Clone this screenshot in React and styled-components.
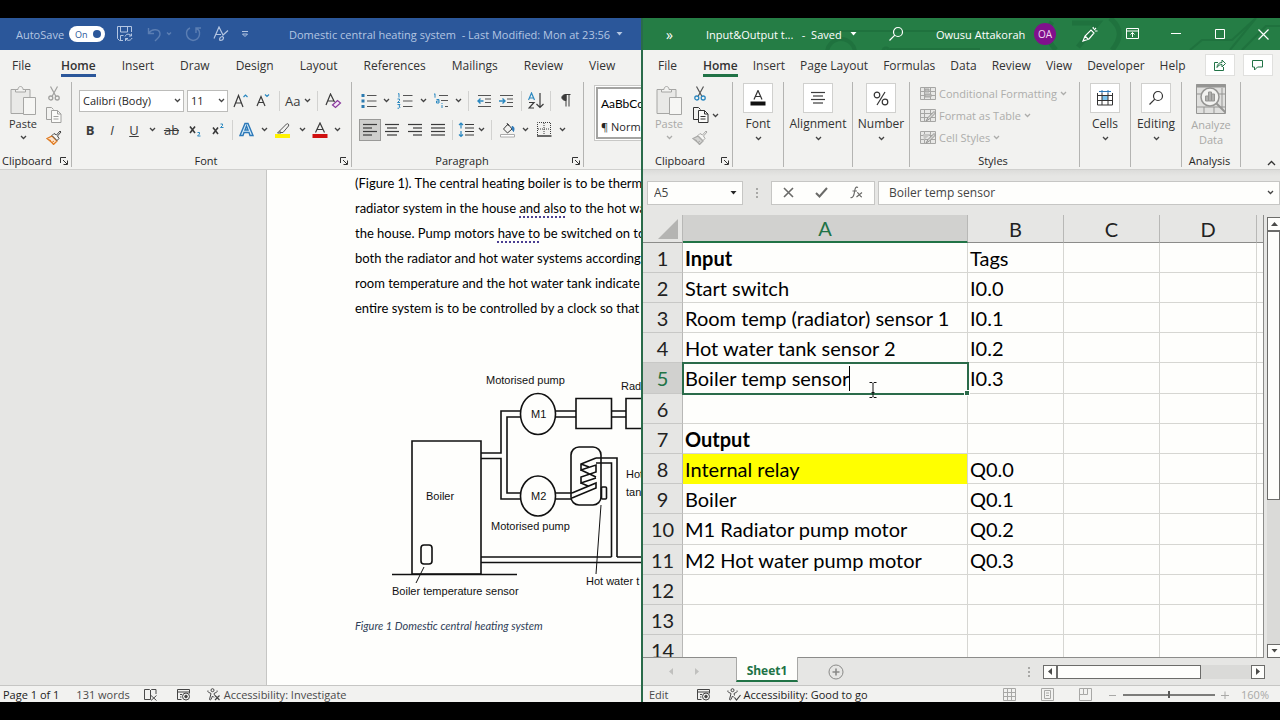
import React, {Fragment} from 'react';
import styled, {createGlobalStyle} from 'styled-components'

const GlobalStyle = createGlobalStyle`
  * {
      box-sizing: border-box;
  }

  body {
      margin: 0;
      background: #000000;
      font-family: 'Open Sans', 'Noto Sans', sans-serif;
      font-size: 12px;
      color: #262626;
  }

  button, input, select {
      font: inherit;
      color: inherit;
      margin: 0;
      padding: 0;
      border: none;
      border-radius: 0;
      background: none;
      outline: none;
  }

  svg {
      display: block;
      flex: none;
      fill: none;
  }

  svg:not([stroke]) {
      stroke: currentColor;
  }
`

const Screen = styled.div`
  display: flex;
  height: 100vh;
  padding: 18px 0;
  background: #000000;
`

const WordWindow = styled.section`
  display: flex;
  flex-direction: column;
  flex: 0 0 calc(50% + 1px);
  min-width: 0;
  overflow: hidden;
  background: #f2f2f0;
`

const ExcelWindow = styled.section`
  display: flex;
  flex-direction: column;
  flex: 1;
  min-width: 0;
  overflow: hidden;
  position: relative;
  border-left: 2px solid #2a6b4a;
  background: #e6e6e4;
`

const TitleBar = styled.header`
  display: flex;
  align-items: center;
  flex: none;
  height: 32px;
  position: relative;
  overflow: hidden;
  white-space: nowrap;
  font-size: 11px;
  color: ${props => props.color};
  background: ${props => props.bg};
`

const TitlePattern = styled.svg`
  position: absolute;
  right: 0;
  top: 0;
`

const TitleItem = styled.div`
  display: flex;
  align-items: center;
  justify-content: ${props => props.start ? "flex-start" : "center"};
  flex: none;
  width: ${props => props.w}px;
  height: 32px;
  padding-left: ${props => props.pad || 0}px;
  position: relative;
`

const TitleButton = styled(TitleItem).attrs({as: 'button'})`
  opacity: ${props => props.dim ? 0.35 : 1};
`

const MoreItem = styled(TitleItem)`
  font-size: 14px;
`

const SheetArrows = styled(TitleItem)`
  gap: 22px;
  height: 27px;
  color: #c0c0be;
`

const Grow = styled.div`
  flex: 1;
`

const AutoSwitch = styled.button`
  display: flex;
  align-items: center;
  justify-content: space-between;
  width: 36px;
  height: 16px;
  padding: 0 4px 0 6px;
  border-radius: 8px;
  font-size: 9px;
  color: #2b579a;
  background: #ffffff;

  & i {
      width: 8px;
      height: 8px;
      border-radius: 4px;
      background: #2b579a;
  }
`

const Avatar = styled.span`
  width: 22px;
  height: 22px;
  border-radius: 11px;
  font-size: 10px;
  line-height: 22px;
  text-align: center;
  color: #f0d8f0;
  background: #80108c;
`

const Tabs = styled.nav`
  display: flex;
  flex: none;
  height: 32px;
  gap: ${props => props.gap}px;
  padding: 0 0 0 ${props => props.start}px;
  overflow: hidden;
  background: #f2f2f0;

  & > button:first-child {
      margin-right: ${props => props.extra}px;
  }
`

const Tab = styled.button`
  flex: none;
  height: 27px;
  line-height: 27px;
  padding-top: 2px;
  font-size: 12px;
  font-weight: ${props => props.active ? 600 : 400};
  color: #333333;
  border-bottom: 3px solid ${props => props.active || "transparent"};
`

const TabActions = styled.div`
  display: flex;
  gap: 8px;
  margin-left: auto;
  padding: 4px 7px 0 0;
`

const SmallBox = styled.button`
  display: grid;
  place-items: center;
  flex: none;
  width: 30px;
  height: 22px;
  border: 1px solid #e0e0de;
  color: #217346;
  background: #ffffff;
`

const Ribbon = styled.div`
  display: flex;
  flex: none;
  height: 88px;
  position: relative;
  overflow: hidden;
  border-bottom: 1px solid #d0d0ce;
  background: #f2f2f0;
`

const Group = styled.div`
  display: flex;
  flex-direction: column;
  flex: ${props => props.grow ? "1 0" : "0 0"} ${props => props.w}px;
  height: 85px;
  border-right: 1px solid ${props => props.open ? "transparent" : "#b4b4b2"};
`

const GroupBody = styled.div`
  flex: 1;
  display: flex;
  flex-direction: ${props => props.column ? "column" : "row"};
  padding-left: ${props => props.pad || 0}px;
`

const GroupFoot = styled.div`
  display: flex;
  align-items: center;
  flex: none;
  height: 16px;
  margin-bottom: -2px;
  padding-right: 3px;
  font-size: 11px;
  line-height: 16px;

  & span {
      flex: 1;
      padding-left: ${props => props.pad || 0}px;
      text-align: ${props => props.pad ? "left" : "center"};
  }
`

const ToolRow = styled.div`
  display: flex;
  align-items: center;
  height: 29px;

  &:first-child {
      margin-top: 4px;
  }
`

const Tool = styled.button`
  display: flex;
  align-items: center;
  justify-content: center;
  flex: none;
  width: ${props => props.w || 22}px;
  height: 22px;
  font-size: 13px;
  color: #3b3b3b;
  border: 1px solid ${props => props.on ? "#9a9a98" : "transparent"};
  background: ${props => props.on ? "#cfcfcd" : "none"};

  & b {
      font-weight: 700;
  }
`

const Divider = styled.span`
  flex: none;
  width: 1px;
  height: 20px;
  margin: 0 ${props => props.m || 4}px;
  background: #d2d2d0;
`

const Combo = styled.label`
  display: flex;
  align-items: center;
  flex: none;
  width: ${props => props.w}px;
  height: 22px;
  margin-right: 3px;
  padding: 0 2px 0 3px;
  border: 1px solid #bcbcba;
  font-size: 11px;
  background: #ffffff;

  & select {
      flex: 1;
      min-width: 0;
      appearance: none;
  }
`

const PasteButton = styled.button`
  display: flex;
  flex-direction: column;
  align-items: center;
  flex: none;
  width: ${props => props.w}px;
  padding-top: 4px;
  font-size: 11px;
  line-height: 16px;
  color: ${props => props.dim ? "#a9a9a7" : "#333333"};

  & span {
      margin: 0 0 3px;
  }
`

const ClipColumn = styled.div`
  display: flex;
  flex-direction: column;
`

const BigTool = styled.button`
  display: flex;
  flex-direction: column;
  align-items: center;
  flex: 1;
  font-size: 12px;
  line-height: 16px;
  color: ${props => props.dim ? "#a9a9a7" : "#333333"};

  & > span {
      margin: 3px 0 4px;
  }

  & > em {
      margin-top: 2px;
      font-style: normal;
      font-size: 11px;
      line-height: 15px;
  }
`

const Tile = styled.i`
  display: grid;
  place-items: center;
  width: 30px;
  height: 30px;
  margin-top: 1px;
  border: 1px solid #d0d0ce;
  color: #333333;
  background: #ffffff;
`

const StyleLine = styled.button`
  display: flex;
  align-items: center;
  gap: 3px;
  height: 22px;
  font-size: 11px;
  color: #adadab;
`

const Gallery = styled.div`
  flex: none;
  width: 80px;
  height: 56px;
  margin: 3px 0 0 10px;
  padding: 1px;
  border: 1px solid #c8c8c6;
  background: #ffffff;

  & button {
      display: block;
      width: 100%;
      height: 100%;
      border: 2px solid #a4a4a2;
      padding: 3px 0 0 3px;
      text-align: left;
      font-size: 11px;
      line-height: 23px;
      white-space: nowrap;
  }

  & strong {
      display: block;
      font-family: 'Lato', sans-serif;
      font-size: 12px;
      font-weight: 400;
      color: #000000;
  }
`

const Collapse = styled.button`
  position: absolute;
  right: 4px;
  bottom: 3px;
`

const DocArea = styled.main`
  display: flex;
  flex: 1;
  min-height: 0;
  overflow: hidden;
  background: #e6e6e4;
`

const Gutter = styled.div`
  flex: 0 0 266px;
`

const Page = styled.article`
  flex: 1;
  min-width: 0;
  padding: 1px 0 0 88px;
  overflow: hidden;
  border-left: 1px solid #c6c6c4;
  background: #fefefc;

  & p {
      margin: 0;
      font-family: 'Lato', sans-serif;
      font-size: 13px;
      line-height: 25px;
      white-space: nowrap;
      color: #000000;
  }

  & u {
      text-decoration: underline dotted #4b3f92 2px;
      text-underline-offset: 3px;
  }

  & figure {
      margin: 44px 0 0;
  }

  & figcaption {
      margin-top: 12px;
      font-family: 'Lato', sans-serif;
      font-size: 11px;
      line-height: 18px;
      font-style: italic;
      white-space: nowrap;
      color: #2f4058;
  }
`

const Diagram = styled.svg`
  overflow: visible;

  & text {
      font-family: 'Liberation Sans', Arial, sans-serif;
      font-size: 11px;
      fill: #111111;
      stroke: none;
  }
`

const StatusBar = styled.footer`
  display: flex;
  align-items: center;
  flex: none;
  height: 17px;
  overflow: hidden;
  border-top: 1px solid #c6c6c4;
  font-size: 11px;
  line-height: 16px;
  white-space: nowrap;
  color: #4a4a4a;
  background: #f2f2f0;
`

const StatusItem = styled.span`
  display: flex;
  align-items: center;
  gap: 3px;
  flex: none;
  margin-left: ${props => props.ml || 0}px;
  padding-top: 1px;
  color: ${props => props.color || "inherit"};

  &:last-child {
      padding-right: 11px;
  }
`

const ZoomSlider = styled.input`
  appearance: none;
  width: 92px;
  height: 12px;
  margin: 0 3px;
  background: linear-gradient(#7c7c7a, #7c7c7a) center / 100% 2px no-repeat;

  &::-webkit-slider-thumb {
      appearance: none;
      width: 2px;
      height: 7px;
      background: #5a5a58;
  }
`

const FormulaRow = styled.div`
  display: flex;
  align-items: center;
  flex: none;
  height: 45px;
  padding: 0 0 0 4px;
  background: linear-gradient(#dcdcda, #e6e6e4 6px);
`

const Field = styled.label`
  display: flex;
  align-items: center;
  flex: ${props => props.w ? `0 0 ${props.w}px` : 1};
  min-width: 0;
  height: 24px;
  padding: 0 5px 0 ${props => props.pad}px;
  border: 1px solid #c6c6c4;
  background: #fefefc;

  & input {
      flex: 1;
      min-width: 0;
      font-size: 12px;
      color: #444444;
  }
`

const FormulaButtons = styled.div`
  display: flex;
  align-items: center;
  justify-content: space-around;
  width: 104px;
  height: 24px;
  margin-right: 3px;
  border: 1px solid #c6c6c4;
  color: #6a6a68;
  background: #fefefc;
`

const Dots = styled.div`
  display: flex;
  flex-direction: column;
  align-items: center;
  gap: 2px;
  width: 28px;

  & i {
      width: 2px;
      height: 2px;
      background: #a8a8a6;
  }
`

const SheetArea = styled.div`
  display: flex;
  flex: 1;
  min-height: 0;
`

const SheetClip = styled.div`
  flex: 1;
  min-width: 0;
  overflow: hidden;
  border-right: 1px solid #8c8c8a;
  border-bottom: 1px solid #8c8c8a;
  background: #fefefc;
`

const Sheet = styled.table`
  width: 100%;
  table-layout: fixed;
  border-collapse: separate;
  border-spacing: 0;
  font-family: 'Lato', sans-serif;
  font-size: 20px;
  line-height: 26px;
  color: #000000;

  & tr {
      height: 30px;
  }

  & thead tr {
      height: 28px;
  }

  & tbody tr:nth-child(5n) {
      height: 31px;
  }

  & th {
      padding: 0;
      font-weight: 400;
      text-align: center;
      color: #222222;
      background: #e6e6e4;
      border-right: 1px solid #b8b8b6;
  }

  & thead th {
      padding-top: 1px;
      line-height: 25px;
      border-bottom: 1px solid #8c8c8a;
  }

  & thead th:last-child {
      border-right: none;
  }

  & tbody th {
      border-bottom: 1px solid #c8c8c6;
  }

  & th.picked {
      color: #217346;
      background: #d1d1cf;
  }

  & thead th.picked {
      border-bottom: 2px solid #217346;
  }
`

const Cell = styled.td`
  padding: 0 0 0 2px;
  white-space: nowrap;
  font-weight: ${props => props.bold ? 700 : 400};
  border-right: 1px solid #d6d6d2;
  border-bottom: 1px solid ${props => props.fill || "#d6d6d2"};
  background: ${props => props.fill || "#fefefc"};

  &:last-child {
      border-right: none;
  }
`

const ActiveCell = styled(Cell)`
  position: relative;
  outline: 2px solid #2a6b4a;
  outline-offset: -1px;

  & > div {
      display: flex;
      align-items: center;
      height: 28px;
  }

  & input {
      field-sizing: content;
      height: 26px;
  }
`

const TextCaret = styled.i`
  width: 1px;
  height: 25px;
  background: #000000;
`

const FillHandle = styled.i`
  position: absolute;
  right: -3px;
  bottom: -3px;
  width: 6px;
  height: 6px;
  border: 1px solid #ffffff;
  background: #2a6b4a;
`

const Pointer = styled.svg`
  position: absolute;
  left: 186px;
  top: 19px;
`

const CornerCell = styled.th`
  & svg {
      margin: 0 4px 0 auto;
  }
`

const ScrollV = styled.div`
  display: flex;
  flex-direction: column;
  flex: none;
  width: 13px;
  margin: 2px 0 0 3px;
  background: #dadad8;
`

const ScrollH = styled.div`
  display: flex;
  flex: none;
  width: 222px;
  height: 14px;
  background: #dadad8;
`

const ScrollButton = styled.button`
  display: grid;
  place-items: center;
  flex: none;
  width: 14px;
  height: 14px;
  border: 1px solid #6c6c6a;
  color: #4a4a48;
  background: #fefefc;
`

const ScrollThumb = styled.div`
  flex: 0 0 ${props => props.size};
  border: 1px solid #6c6c6a;
  background: #fefefc;
`

const SheetTabs = styled.div`
  display: flex;
  align-items: center;
  flex: none;
  height: 27px;
  padding-right: 15px;
  color: #8a8a88;
`

const SheetTab = styled.button`
  align-self: flex-start;
  width: 62px;
  height: 25px;
  margin: -1px 30px 0 12px;
  padding-top: 4px;
  font-size: 12px;
  font-weight: 700;
  line-height: 18px;
  color: #217346;
  border: 1px solid #a8a8a6;
  border-top: none;
  border-bottom: 2px solid #217346;
  background: #fefefc;
`

const AnalyzeSvg = styled.svg`
  margin-top: 2px;
`

const Chevron = ({dim}) => (
    <svg width="7" height="5" viewBox="0 0 7 5" stroke={dim ? "#adadab" : "#444444"} strokeWidth="1.3"><path d="M1 1l2.5 2.5L6 1" /></svg>
)

const Caret = () => (
    <svg width="7" height="4" viewBox="0 0 7 4"><path d="M0.5 0h6L3.5 3.5z" fill="currentColor" stroke="none" /></svg>
)

const SideArrow = ({left}) => (
    <svg width="4" height="7" viewBox="0 0 4 7"><path d={left ? "M4 0v7L0 3.500z" : "M0 0v7l4-3.500z"} fill="currentColor" stroke="none" /></svg>
)

const Launcher = () => (
    <svg width="8" height="8" viewBox="0 0 8 8" stroke="#333333"><path d="M0.5 6V0.5H6M3 3l4 4M7.5 3.5v4h-4" /></svg>
)

const ClipboardIcon = () => (
    <svg width="28" height="30" viewBox="0 0 28 30" stroke="#a6a6a4">
        <path d="M2 3.500h19v24H2z" fill="#e9e9e7" />
        <path d="M6.500 6V3.500h2.500c0-4 5-4 5 0h2.500V6z" fill="#f2f2f0" />
        <path d="M14.500 11.500h12v17h-12z" fill="#f6f6f4" />
    </svg>
)

const CutIcon = ({tint, blade}) => (
    <svg width="12" height="15" viewBox="0 0 12 15" stroke={blade}>
        <path d="M2.500 0.500l5.500 10M9.500 0.500L4 10.500" strokeWidth="1.200" />
        <circle cx="2.800" cy="12" r="2" stroke={tint} strokeWidth="1.300" />
        <circle cx="9.200" cy="12" r="2" stroke={tint} strokeWidth="1.300" />
    </svg>
)

const CopyIcon = ({color}) => (
    <svg width="16" height="16" viewBox="0 0 16 16" stroke={color}>
        <path d="M5 12.500H0.500v-12h5l2 2" />
        <path d="M5.500 3.500h6l3.500 3.500v8.500h-9.500z" fill="#fbfbf9" />
        <path d="M11.500 3.500V7H15M7.500 9.500h5M7.500 12h5" />
    </svg>
)

const PainterIcon = ({dim}) => (
    <svg width="16" height="15" viewBox="0 0 16 15">
        <path d="M1 8.500l5-2.500 5 5-3.500 3.500c-1-2-4-4-6.500-6z" fill={dim ? "#d4d4d2" : "#fbe3cc"} stroke={dim ? "#a8a8a6" : "#e07a1f"} strokeWidth="1.300" />
        <path d="M3 10l2 .5M6 12.500l2-1.500" stroke={dim ? "#a8a8a6" : "#e07a1f"} />
        <path d="M6 5.500L8 3.500l2.500 1.500L14 1l1 1-3.500 4L13 8.500l-2 2z" fill="#f6f6f4" stroke={dim ? "#a8a8a6" : "#444444"} />
    </svg>
)

const LinesIcon = ({rows}) => (
    <svg width="14" height="14" viewBox="0 0 14 14" stroke="#3b3b3b" strokeWidth="1.200">
        {rows.map(([from, to], index) => <path key={index} d={`M${from} ${1.5 + index * 3.5}H${to}`} />)}
    </svg>
)

const ListIcon = ({kind}) => (
    <svg width="16" height="16" viewBox="0 0 16 16" stroke="#555555" strokeWidth="1.200">
        {kind === 'multi' ? (
            <Fragment>
                <path d="M6 2.500h9M8 7.500h7M12 13.500h3" />
                <path d="M1 1.500l1-.8v4M3.500 6.500h2.500v3.500H3.500V8h2.500M9 10v1M9 12v3" stroke="#2b88c0" strokeWidth="1" />
            </Fragment>
        ) : (
            <path d="M6 2.500h9.500M6 8h9.500M6 13.500h9.500" />
        )}
        {kind === 'bullets' && <path d="M0.500 1h3v3h-3zM0.500 6.500h3v3h-3zM0.500 12h3v3h-3z" fill="#2b7ab0" stroke="none" />}
        {kind === 'numbers' && <path d="M1 1l1-.5v4M.5 6h2v1.500l-2 2h2.500M.5 11.500h2.500l-1 1.500 1 1.200-1 1H.5" stroke="#2b88c0" strokeWidth="1" />}
    </svg>
)

const IndentIcon = ({out}) => (
    <svg width="15" height="14" viewBox="0 0 15 14" stroke="#555555" strokeWidth="1.200">
        <path d="M1 1.500h13M8 5h6M8 8.500h6M1 12.500h13" />
        <path d={out ? "M6.500 7H1M3.500 4.500L1 7l2.500 2.500" : "M0 7h5.500M3.500 4.500L6 7 3.500 9.500"} stroke="#2b88c0" strokeWidth="1.400" />
    </svg>
)

const RobotIcon = () => (
    <svg width="14" height="13" viewBox="0 0 14 13" stroke="#444444">
        <path d="M0.500 1.500h12v4M0.500 1.500v10h4M0.500 4h12M3 6.500h2M3 9h1.500" />
        <circle cx="9" cy="8.500" r="3.500" fill="#f2f2f0" />
        <circle cx="9" cy="8.500" r="1.300" fill="#444444" />
    </svg>
)

const PersonIcon = ({cross}) => (
    <svg width="14" height="13" viewBox="0 0 14 13" stroke="#444444">
        <circle cx="5.500" cy="2.200" r="1.500" />
        <path d="M1 2.500c-1 1 0 1.500 3 3L2.500 11.500c1 1.500 1.500 0 3-3.500l1.500 1.500M10 2.500c1 1 0 1.500-3 3l.5 2" />
        <path d={cross ? "M8 7.500l4.500 4.500M12.500 7.500L8 12" : "M7.500 9.500l2 2.500 4-5"} strokeWidth="1.200" />
    </svg>
)

const SearchIcon = () => (
    <svg width="16" height="16" viewBox="0 0 16 16" strokeWidth="1.200"><circle cx="10" cy="6" r="4.500" /><path d="M6.800 9.200L1.500 14.500" /></svg>
)

const GridStyleIcon = ({kind}) => (
    <svg width="16" height="15" viewBox="0 0 16 15" stroke="#a6a6a4">
        <path d="M0.500 1.500h15v12H0.500zM0.500 5.500h15M0.500 9.500h15M4.500 1.500v12M10.500 1.500v12" fill="#e8e8e6" />
        {kind === 0 ? <path d="M5 3h4v3H5zM5 8h6v3H5z" fill="#bcbcba" /> : <path d="M6 13l2-3.500 6-6 1.500 1.500-6 6z" fill="#d6d6d4" stroke="#959593" />}
        {kind === 2 && <path d="M3 4h8L4 10z" fill="#c6c6c4" stroke="none" />}
    </svg>
)

const wordTabs = ['File', 'Home', 'Insert', 'Draw', 'Design', 'Layout', 'References', 'Mailings', 'Review', 'View']
const excelTabs = ['File', 'Home', 'Insert', 'Page Layout', 'Formulas', 'Data', 'Review', 'View', 'Developer', 'Help']
const styleTools = ['Conditional Formatting', 'Format as Table', 'Cell Styles']

const sheetRows = [
    {a: 'Input', b: 'Tags', bold: true},
    {a: 'Start switch', b: 'I0.0'},
    {a: 'Room temp (radiator) sensor 1', b: 'I0.1'},
    {a: 'Hot water tank sensor 2', b: 'I0.2'},
    {a: 'Boiler temp sensor', b: 'I0.3', active: true},
    {},
    {a: 'Output', bold: true},
    {a: 'Internal relay', b: 'Q0.0', fill: '#ffff00'},
    {a: 'Boiler', b: 'Q0.1'},
    {a: 'M1 Radiator pump motor', b: 'Q0.2'},
    {a: 'M2 Hot water pump motor', b: 'Q0.3'},
    {},
    {},
    {},
]

const WordTitle = () => (
    <TitleBar bg="#2b579a" color="#b4c6e2">
        <TitleItem w={69} pad={16} start>AutoSave</TitleItem>
        <AutoSwitch aria-label="AutoSave">On<i /></AutoSwitch>
        <TitleButton w={40} aria-label="Save">
            <svg width="16" height="16" viewBox="0 0 16 16">
                <path d="M6 14.500H2.500l-2-2v-12h14V6M3.500 0.500V6h7V0.500M3.500 14V9.500h3" />
                <path d="M8 10.500c1-3 5-3 6.500-.5M14.500 7.500V10H12M15 12c-1 3-5 3-6.500.5M8.500 15v-2.500H11" />
            </svg>
        </TitleButton>
        <TitleButton w={30} dim aria-label="Undo">
            <svg width="26" height="16" viewBox="0 0 26 16" strokeWidth="1.400"><path d="M1.500 2v5.500H7M2 7c3-5 11-4 11 1 0 3-3 5-5 7" /><path d="M20 6.500l2 2 2-2" /></svg>
        </TitleButton>
        <TitleButton w={36} dim aria-label="Redo">
            <svg width="17" height="16" viewBox="0 0 17 16" strokeWidth="1.400"><path d="M5 2C0 4 0 13 8 14.500c8-1 8-10 3.500-12M11 7V2h5" /></svg>
        </TitleButton>
        <TitleButton w={20} aria-label="Editor">
            <svg width="16" height="16" viewBox="0 0 16 16" strokeWidth="1.200"><path d="M1 12.500L6 1l4 8M3 8.500h5M15 4.500l-5.500 5M7 14.500c-1-2 .5-4 2.500-4l1 1c0 2-1.500 3-3.500 3z" /></svg>
        </TitleButton>
        <TitleButton w={28} aria-label="Customise toolbar">
            <svg width="8" height="8" viewBox="0 0 8 8"><path d="M1 1.500h6M1.500 4l2.500 2.500L6.500 4z" /></svg>
        </TitleButton>
        <TitleItem w={358} pad={30} start>Domestic central heating system &nbsp;- Last Modified: Mon at 23:56 &nbsp;<Caret /></TitleItem>
    </TitleBar>
)

const WordRibbon = () => (
    <Ribbon>
        <Group w={72}>
            <GroupBody>
                <PasteButton w={46}><ClipboardIcon /><span>Paste</span><Chevron /></PasteButton>
                <ClipColumn>
                    <Tool w={16} aria-label="Cut"><CutIcon blade="#a0a09e" tint="#a0a09e" /></Tool>
                    <Tool w={16} aria-label="Copy"><CopyIcon color="#a0a09e" /></Tool>
                    <Tool w={16} aria-label="Format painter"><PainterIcon /></Tool>
                </ClipColumn>
            </GroupBody>
            <GroupFoot pad={2}><span>Clipboard</span><Launcher /></GroupFoot>
        </Group>
        <Group w={280}>
            <GroupBody column pad={7}>
                <ToolRow>
                    <Combo w={105}><select aria-label="Font"><option>Calibri (Body)</option></select><Chevron /></Combo>
                    <Combo w={41}><select aria-label="Font size"><option>11</option></select><Chevron /></Combo>
                    <Tool w={20} aria-label="Grow font"><svg width="16" height="16" viewBox="0 0 16 16" strokeWidth="1.200"><path d="M1 14L5.500 2.500 10 14M2.500 10h6" /><path d="M10.500 4l2-2 2 2" stroke="#2b88c0" /></svg></Tool>
                    <Tool w={24} aria-label="Shrink font"><svg width="14" height="16" viewBox="0 0 14 16" strokeWidth="1.200"><path d="M1 13l4-9.500L9 13M2.500 9.500h5" /><path d="M9 1.500l2 2 2-2" stroke="#2b88c0" /></svg></Tool>
                    <Divider />
                    <Tool w={28}>Aa&nbsp;<Chevron /></Tool>
                    <Divider m={5} />
                    <Tool w={20} aria-label="Clear formatting"><svg width="17" height="16" viewBox="0 0 17 16" strokeWidth="1.200"><path d="M1 12L5.500 1l4 8M2.500 8h6" /><path d="M7.500 12l5-4.500 3 2.500-5 4.500z" stroke="#8a3a9c" fill="#f6e8f8" /></svg></Tool>
                </ToolRow>
                <ToolRow>
                    <Tool w={22}><b>B</b></Tool>
                    <Tool w={22}><i>I</i></Tool>
                    <Tool w={22}><u>U</u></Tool>
                    <Tool w={14} aria-label="Underline style"><Chevron /></Tool>
                    <Tool w={25}><s>ab</s></Tool>
                    <Tool w={24} aria-label="Subscript"><svg width="14" height="14" viewBox="0 0 14 14" strokeWidth="1.600"><path d="M1 3.500l5 6.500M6 3.500L1 10" /><path d="M8.500 9.500h2v1.500l-2 2h3" stroke="#2b88c0" strokeWidth="1" /></svg></Tool>
                    <Tool w={22} aria-label="Superscript"><svg width="14" height="14" viewBox="0 0 14 14" strokeWidth="1.600"><path d="M1 4.500L6 11M6 4.500L1 11" /><path d="M8.500 1h2v1.500l-2 2h3" stroke="#2b88c0" strokeWidth="1" /></svg></Tool>
                    <Divider m={2} />
                    <Tool w={24} aria-label="Text effects"><svg width="16" height="15" viewBox="0 0 16 15"><path d="M1 13.500L6 1.500h3l5 12h-3l-1-3H5l-1 3zM6 8h3L7.500 4z" stroke="#2b78b8" strokeWidth="1.400" fill="#d8ecf8" /></svg></Tool>
                    <Tool w={10} aria-label="Text effects options"><Chevron /></Tool>
                    <Tool w={28} aria-label="Highlight"><svg width="17" height="16" viewBox="0 0 17 16"><path d="M5 8.500L11.500 2c1-1 3 .5 2 2L8 10.500H5zM5 8.500l-2.500 2.500H6" stroke="#555555" /><path d="M0 12h15v4H0z" fill="#fff200" stroke="none" /></svg></Tool>
                    <Tool w={10} aria-label="Highlight colour"><Chevron /></Tool>
                    <Tool w={25} aria-label="Font colour"><svg width="16" height="16" viewBox="0 0 16 16"><path d="M3.500 10.500L8 1l4.500 9.500M5 7.500h6" strokeWidth="1.200" /><path d="M0.500 12h15v4h-15z" fill="#d01010" stroke="none" /></svg></Tool>
                    <Tool w={10} aria-label="Font colour options"><Chevron /></Tool>
                </ToolRow>
            </GroupBody>
            <GroupFoot><span>Font</span><Launcher /></GroupFoot>
        </Group>
        <Group w={232}>
            <GroupBody column pad={7}>
                <ToolRow>
                    <Tool w={20} aria-label="Bullets"><ListIcon kind="bullets" /></Tool>
                    <Tool w={14} aria-label="Bullet options"><Chevron /></Tool>
                    <Tool w={24} aria-label="Numbering"><ListIcon kind="numbers" /></Tool>
                    <Tool w={12} aria-label="Numbering options"><Chevron /></Tool>
                    <Tool w={24} aria-label="Multilevel list"><ListIcon kind="multi" /></Tool>
                    <Tool w={10} aria-label="Multilevel options"><Chevron /></Tool>
                    <Divider m={5} />
                    <Tool w={20} aria-label="Decrease indent"><IndentIcon out /></Tool>
                    <Tool w={24} aria-label="Increase indent"><IndentIcon /></Tool>
                    <Divider m={3} />
                    <Tool w={22} aria-label="Sort"><svg width="16" height="17" viewBox="0 0 16 17" strokeWidth="1.200"><path d="M0.500 8l3-7 3 7M1.500 6h4" stroke="#2b88c0" /><path d="M1 10.500h5L1 16h5M12 1v14M8.500 12l3.500 3.500 3.500-3.500" /></svg></Tool>
                    <Divider m={3} />
                    <Tool w={24} aria-label="Show marks"><svg width="10" height="13" viewBox="0 0 10 13"><path d="M5 0.500v12M8 0.500v12M9.500 0.500H4" /><path d="M5 0.500C-.5 0.500-.5 6.500 5 6.500z" fill="currentColor" /></svg></Tool>
                </ToolRow>
                <ToolRow>
                    <Tool w={22} on aria-label="Align left"><LinesIcon rows={[[0, 14], [0, 9], [0, 14], [0, 9]]} /></Tool>
                    <Tool w={22} aria-label="Centre"><LinesIcon rows={[[0, 14], [2, 12], [0, 14], [2, 12]]} /></Tool>
                    <Tool w={24} aria-label="Align right"><LinesIcon rows={[[0, 14], [5, 14], [0, 14], [5, 14]]} /></Tool>
                    <Tool w={22} aria-label="Justify"><LinesIcon rows={[[0, 14], [0, 14], [0, 14], [0, 14]]} /></Tool>
                    <Divider m={3} />
                    <Tool w={20} aria-label="Line spacing"><svg width="17" height="16" viewBox="0 0 17 16" strokeWidth="1.200"><path d="M7 2.500h9M7 6h9M7 9.500h9M7 13h9" /><path d="M3 1v5.500M1 3l2-2 2 2M3 9v5.500M1 12.500l2 2 2-2" stroke="#2b88c0" /></svg></Tool>
                    <Tool w={10} aria-label="Spacing options"><Chevron /></Tool>
                    <Divider m={5} />
                    <Tool w={22} aria-label="Shading"><svg width="16" height="16" viewBox="0 0 16 16"><path d="M3.500 7L8 2l4 5-4.500 4zM7 1l1.500 3" /><path d="M12 4.500c2 0 2.500 2 1.500 5-1-1-1.500-3-1.500-5z" fill="#2b78b8" stroke="#2b78b8" /><path d="M0.500 12.500h14v2.500h-14z" stroke="#aaaaaa" fill="#ffffff" /></svg></Tool>
                    <Tool w={12} aria-label="Shading options"><Chevron /></Tool>
                    <Tool w={26} aria-label="Borders"><svg width="15" height="15" viewBox="0 0 15 15"><path d="M0.500 13V0.500h13V13M7 1v12M1 7h12" strokeDasharray="1 1" /><path d="M0 14h14.500" strokeWidth="1.500" /></svg></Tool>
                    <Tool w={10} aria-label="Border options"><Chevron /></Tool>
                </ToolRow>
            </GroupBody>
            <GroupFoot><span>Paragraph</span><Launcher /></GroupFoot>
        </Group>
        <Gallery><button><strong>AaBbCc</strong>¶ Norm</button></Gallery>
    </Ribbon>
)

const HeatingDiagram = () => (
    <Diagram width="286" height="240" viewBox="355 365 286 240" stroke="#111111" strokeWidth="1.600">
        <path d="M412 441h69v133h-69z" />
        <path d="M392 574.500h125" />
        <rect x="421" y="545" width="11" height="19" rx="3" />
        <path d="M424 567l-8 16M601 505l-5 69" strokeWidth="1" />
        <path d="M481 453h20v-42h20M481 458.500h20V499h20M521 417h-14v76h14" />
        <path d="M555 411h21M555 417h21M611 411h15M611 417h15M555 493h17M555 499h17" />
        <ellipse cx="538" cy="414" rx="17.500" ry="20.500" />
        <ellipse cx="538" cy="496" rx="17.500" ry="20" />
        <path d="M576 398.500h35.500v30H576zM660 398.500h-34v30h34" />
        <rect x="571" y="447" width="30" height="58" rx="8" />
        <path d="M572 493l24-10v5l-24 10M596 458l-15 6v6l15-5v7l-15 5v6l15-5M581 470l15 7M581 483l7 3M581 464l8 3" />
        <path d="M596 458h21v99M596 463h15.500v94" />
        <rect x="601.500" y="487" width="5" height="12" rx="1" />
        <path d="M481 557h130.500M617 557h40M481 562.500h176" />
        <text x="486" y="384">Motorised pump</text>
        <text x="491" y="530">Motorised pump</text>
        <text x="531" y="418">M1</text>
        <text x="531" y="500">M2</text>
        <text x="426" y="500">Boiler</text>
        <text x="621" y="390">Rad</text>
        <text x="626" y="478">Hot</text>
        <text x="626" y="496">tan</text>
        <text x="586" y="585">Hot water t</text>
        <text x="392" y="595">Boiler temperature sensor</text>
    </Diagram>
)

const ExcelTitle = () => (
    <TitleBar bg="#257d45" color="#ffffff">
        <TitlePattern width="470" height="32" viewBox="0 0 470 32" stroke="#1c6c3a" strokeWidth="3" opacity="0.6">
            <circle cx="31" cy="35" r="14" strokeWidth="4" />
            <circle cx="76" cy="33" r="3" />
            <path d="M10 13H180l24 6M80 31h90M380 32l12-10h30l24-22M420 32l26-32M470 8h-14l-24 24" strokeWidth="2" />
            <path d="M242 4c-6 8-6 18 4 28M300 0c12 10 12 20 2 32M262 5h26l-20 24" strokeWidth="5" />
        </TitlePattern>
        <MoreItem w={63} pad={23} start>»</MoreItem>
        <TitleItem w={173} start>Input&amp;Output t... &nbsp;&nbsp;-&nbsp; Saved &nbsp;&nbsp;<Caret /></TitleItem>
        <TitleButton w={34} aria-label="Search"><SearchIcon /></TitleButton>
        <Grow />
        <TitleItem w={98} start>Owusu Attakorah</TitleItem>
        <TitleItem w={22}><Avatar>OA</Avatar></TitleItem>
        <TitleButton w={68} aria-label="Coming soon"><svg width="16" height="16" viewBox="0 0 16 16" strokeWidth="1.200"><path d="M1 15l2-5 6-6 3 3-5 6zM3 10l3 3M11 1l.5 2M14 2l-2 2M15.500 5H13" /></svg></TitleButton>
        <TitleButton w={18} aria-label="Ribbon display"><svg width="14" height="12" viewBox="0 0 14 12"><path d="M0.500 0.500h12v10H0.500zM0.500 3h12M6.500 9V4.500M4.500 6.500l2-2 2 2" /></svg></TitleButton>
        <TitleButton w={68} aria-label="Minimise"><svg width="10" height="10" viewBox="0 0 10 10"><path d="M0 4.500h10" /></svg></TitleButton>
        <TitleButton w={20} aria-label="Maximise"><svg width="10" height="10" viewBox="0 0 10 10"><path d="M0.500 0.500h9v9h-9z" /></svg></TitleButton>
        <TitleButton w={50} pad={16} aria-label="Close"><svg width="11" height="11" viewBox="0 0 11 11" strokeWidth="1.200"><path d="M0.500 0.500l10 10M10.500 0.500l-10 10" /></svg></TitleButton>
    </TitleBar>
)

const ExcelRibbon = () => (
    <Ribbon>
        <Group w={90}>
            <GroupBody pad={4}>
                <PasteButton w={44} dim><ClipboardIcon /><span>Paste</span><Chevron dim /></PasteButton>
                <ClipColumn>
                    <Tool w={18} aria-label="Cut"><CutIcon blade="#555555" tint="#2b88c0" /></Tool>
                    <Tool w={30} aria-label="Copy"><CopyIcon color="#333333" />&nbsp;<Chevron /></Tool>
                    <Tool w={18} aria-label="Format painter"><PainterIcon dim /></Tool>
                </ClipColumn>
            </GroupBody>
            <GroupFoot pad={12}><span>Clipboard</span><Launcher /></GroupFoot>
        </Group>
        <Group w={51}>
            <BigTool>
                <Tile><svg width="16" height="16" viewBox="0 0 16 16"><path d="M4 9.500L8 0.500l4 9M5.500 6.500h5" strokeWidth="1.200" /><path d="M0.500 11.500h15v4h-15z" fill="#111111" stroke="none" /></svg></Tile>
                <span>Font</span><Chevron />
            </BigTool>
        </Group>
        <Group w={69}>
            <BigTool>
                <Tile><LinesIcon rows={[[0, 14], [2, 12], [0, 14], [2, 12]]} /></Tile>
                <span>Alignment</span><Chevron />
            </BigTool>
        </Group>
        <Group w={57}>
            <BigTool>
                <Tile><svg width="16" height="15" viewBox="0 0 16 15" strokeWidth="1.200"><circle cx="4" cy="4" r="2.800" /><circle cx="12" cy="11" r="2.800" /><path d="M12 1L4 14" /></svg></Tile>
                <span>Number</span><Chevron />
            </BigTool>
        </Group>
        <Group w={169} grow>
            <GroupBody column pad={10}>
                {styleTools.map((name, index) => (
                    <StyleLine key={name}><GridStyleIcon kind={index} />{name}<Chevron dim /></StyleLine>
                ))}
            </GroupBody>
            <GroupFoot><span>Styles</span></GroupFoot>
        </Group>
        <Group w={51}>
            <BigTool>
                <Tile><svg width="16" height="16" viewBox="0 0 16 16"><path d="M5 5.500h6v5H5z" fill="#7cc4ee" stroke="none" /><path d="M0.500 3v12h15V3M0.500 5.500h15M0.500 10.500h15M5 3v12M11 3v12" /><path d="M2 1.500h12M5 0v3M11 0v3" stroke="#2b78b8" /></svg></Tile>
                <span>Cells</span><Chevron />
            </BigTool>
        </Group>
        <Group w={51}>
            <BigTool>
                <Tile><SearchIcon /></Tile>
                <span>Editing</span><Chevron />
            </BigTool>
        </Group>
        <Group w={59}>
            <BigTool dim>
                <AnalyzeSvg width="30" height="31" viewBox="0 0 30 31" stroke="#959593">
                    <path d="M0.500 0.500h29v29H0.500z" fill="#e0e0de" />
                    <path d="M0 2h30" strokeWidth="3" />
                    <path d="M0 10h30M0 23h30M8 23v6M18 23v6M26 4v20" />
                    <circle cx="14" cy="13" r="9" fill="#f2f2f0" strokeWidth="1.500" />
                    <path d="M20.500 19.500l9 9" strokeWidth="2" />
                    <path d="M9.500 12h3v5h-3zM12.500 8h3v9h-3zM15.500 10h3v7h-3z" fill="#b0b0ae" />
                </AnalyzeSvg>
                <em>Analyze<br />Data</em>
            </BigTool>
            <GroupFoot><span>Analysis</span></GroupFoot>
        </Group>
        <Group w={39} open />
        <Collapse aria-label="Collapse ribbon"><svg width="9" height="6" viewBox="0 0 9 6" stroke="#333333" strokeWidth="1.300"><path d="M1 5l3.500-3.500L8 5" /></svg></Collapse>
    </Ribbon>
)

const SpreadSheet = () => (
    <SheetArea>
        <SheetClip>
            <Sheet>
                <colgroup>
                    <col width="40" />
                    <col width="285" />
                    <col width="96" />
                    <col width="96" />
                    <col width="97" />
                    <col />
                </colgroup>
                <thead>
                    <tr>
                        <CornerCell aria-label="Select all"><svg width="20" height="20" viewBox="0 0 20 20"><path d="M20 0v20H0z" fill="#b4b4b2" stroke="none" /></svg></CornerCell>
                        <th className="picked">A</th>
                        <th>B</th>
                        <th>C</th>
                        <th>D</th>
                        <th></th>
                    </tr>
                </thead>
                <tbody>
                    {sheetRows.map((row, index) => (
                        <tr key={index}>
                            <th className={row.active ? 'picked' : undefined}>{index + 1}</th>
                            {row.active ? (
                                <ActiveCell>
                                    <div><input aria-label="A5" defaultValue={row.a} /><TextCaret /></div>
                                    <FillHandle />
                                    <Pointer width="8" height="16" viewBox="0 0 8 16" stroke="#111111"><path d="M0.500 0.500H3l1 1 1-1h2.500M4 1.500v13M0.500 15.500H3l1-1 1 1h2.500M2.500 10.500h3" /></Pointer>
                                </ActiveCell>
                            ) : (
                                <Cell bold={row.bold} fill={row.fill}>{row.a}</Cell>
                            )}
                            <Cell>{row.b}</Cell>
                            <Cell />
                            <Cell />
                            <Cell />
                        </tr>
                    ))}
                </tbody>
            </Sheet>
        </SheetClip>
        <ScrollV>
            <ScrollButton aria-label="Scroll up"><svg width="7" height="4" viewBox="0 0 7 4"><path d="M0 4h7L3.500 0z" fill="currentColor" stroke="none" /></svg></ScrollButton>
            <ScrollThumb size="61%" />
            <Grow />
            <ScrollButton aria-label="Scroll down"><Caret /></ScrollButton>
        </ScrollV>
    </SheetArea>
)

const App = () => {
    return (
        <Fragment>
            <GlobalStyle />
            <Screen>
                <WordWindow>
                    <WordTitle />
                    <Tabs gap={26} start={12} extra={4}>
                        {wordTabs.map(name => <Tab key={name} active={name === 'Home' ? '#2b579a' : undefined}>{name}</Tab>)}
                    </Tabs>
                    <WordRibbon />
                    <DocArea>
                        <Gutter />
                        <Page>
                            <p>
                                (Figure 1). The central heating boiler is to be thermo<br />
                                radiator system in the house <u>and also</u> to the hot wat<br />
                                the house. Pump motors <u>have to</u> be switched on to<br />
                                both the radiator and hot water systems according t<br />
                                room temperature and the hot water tank indicate t<br />
                                entire system is to be controlled by a clock so that it
                            </p>
                            <figure>
                                <HeatingDiagram />
                                <figcaption>Figure 1 Domestic central heating system</figcaption>
                            </figure>
                        </Page>
                    </DocArea>
                    <StatusBar>
                        <StatusItem ml={3} color="#222222">Page 1 of 1</StatusItem>
                        <StatusItem ml={17}>131 words</StatusItem>
                        <StatusItem ml={14}><svg width="14" height="13" viewBox="0 0 14 13"><path d="M6.500 2v9.500H0.500v-10h5l1 1 1-1h4.500V6M7 7.500l5.500 5M12.500 7.500L7 12.500" /></svg></StatusItem>
                        <StatusItem ml={19}><RobotIcon /></StatusItem>
                        <StatusItem ml={16}><PersonIcon cross />Accessibility: Investigate</StatusItem>
                    </StatusBar>
                </WordWindow>
                <ExcelWindow>
                    <ExcelTitle />
                    <Tabs gap={15} start={15} extra={11}>
                        {excelTabs.map(name => <Tab key={name} active={name === 'Home' ? '#217346' : undefined}>{name}</Tab>)}
                        <TabActions>
                            <SmallBox aria-label="Share"><svg width="12" height="12" viewBox="0 0 12 12"><path d="M4 3.500H0.500v8h9V8M3 8.500c0-3 2-5 5-5V1l3.500 3.500L8 8V5.500c-2 0-4 1-5 3z" /></svg></SmallBox>
                            <SmallBox aria-label="Comments"><svg width="12" height="11" viewBox="0 0 12 11"><path d="M0.500 0.500h10v6.500h-5l-3 3V7h-2z" /></svg></SmallBox>
                        </TabActions>
                    </Tabs>
                    <ExcelRibbon />
                    <FormulaRow>
                        <Field w={96} pad={6}><input aria-label="Name box" defaultValue="A5" /><Caret /></Field>
                        <Dots><i /><i /><i /></Dots>
                        <FormulaButtons>
                            <button aria-label="Cancel"><svg width="11" height="11" viewBox="0 0 11 11" strokeWidth="1.600"><path d="M1 1l9 9M10 1l-9 9" /></svg></button>
                            <button aria-label="Enter"><svg width="13" height="11" viewBox="0 0 13 11" strokeWidth="2"><path d="M1 6l3.500 3.500L12 1" /></svg></button>
                            <button aria-label="Insert function"><svg width="13" height="13" viewBox="0 0 13 13" strokeWidth="1.200"><path d="M8 1.500C5.500 0 5 3 4.500 6S3 12.500 0.500 11.500M2.500 5h4.500M7 6.500c2 0 2.500 4.500 5 4.500M12 6.500L6.500 11" /></svg></button>
                        </FormulaButtons>
                        <Field pad={10}><input aria-label="Formula bar" defaultValue="Boiler temp sensor" /><Chevron /></Field>
                    </FormulaRow>
                    <SpreadSheet />
                    <SheetTabs>
                        <SheetArrows w={81}><SideArrow left /><SideArrow /></SheetArrows>
                        <SheetTab>Sheet1</SheetTab>
                        <button aria-label="New sheet"><svg width="16" height="16" viewBox="0 0 16 16"><circle cx="8" cy="8" r="7" /><path d="M8 4.500v7M4.500 8h7" strokeWidth="1.600" /></svg></button>
                        <Grow />
                        <Dots><i /><i /><i /></Dots>
                        <ScrollH>
                            <ScrollButton aria-label="Scroll left"><SideArrow left /></ScrollButton>
                            <ScrollThumb size="65%" />
                            <Grow />
                            <ScrollButton aria-label="Scroll right"><SideArrow /></ScrollButton>
                        </ScrollH>
                    </SheetTabs>
                    <StatusBar>
                        <StatusItem ml={6}>Edit</StatusItem>
                        <StatusItem ml={28}><RobotIcon /></StatusItem>
                        <StatusItem ml={16} color="#222222"><PersonIcon />Accessibility: Good to go</StatusItem>
                        <Grow />
                        <StatusItem color="#a8a8a6"><svg width="13" height="13" viewBox="0 0 13 13"><path d="M0.500 0.500h12v12H0.500zM4.500 0v13M8.500 0v13M0 4.500h13M0 8.500h13" /></svg></StatusItem>
                        <StatusItem ml={25} color="#a8a8a6"><svg width="13" height="13" viewBox="0 0 13 13"><path d="M0.500 0.500h12v12H0.500zM3.500 2.500h6v8h-6zM5 5h3M5 7.500h3" /></svg></StatusItem>
                        <StatusItem ml={25} color="#a8a8a6"><svg width="13" height="13" viewBox="0 0 13 13"><path d="M0.500 0.500h12v12H0.500zM4.500 0.500v6h4v-6M0.500 6.500h4" /></svg></StatusItem>
                        <StatusItem ml={17} color="#a8a8a6">
                            <svg width="8" height="8" viewBox="0 0 8 8"><path d="M0 4.500h7" /></svg>
                            <ZoomSlider type="range" aria-label="Zoom" defaultValue="50" />
                            <svg width="8" height="8" viewBox="0 0 8 8"><path d="M0 4.500h8M4 0.500v8" /></svg>
                        </StatusItem>
                        <StatusItem ml={12} color="#a8a8a6">160%</StatusItem>
                    </StatusBar>
                </ExcelWindow>
            </Screen>
        </Fragment>
    );
}

export default App;
